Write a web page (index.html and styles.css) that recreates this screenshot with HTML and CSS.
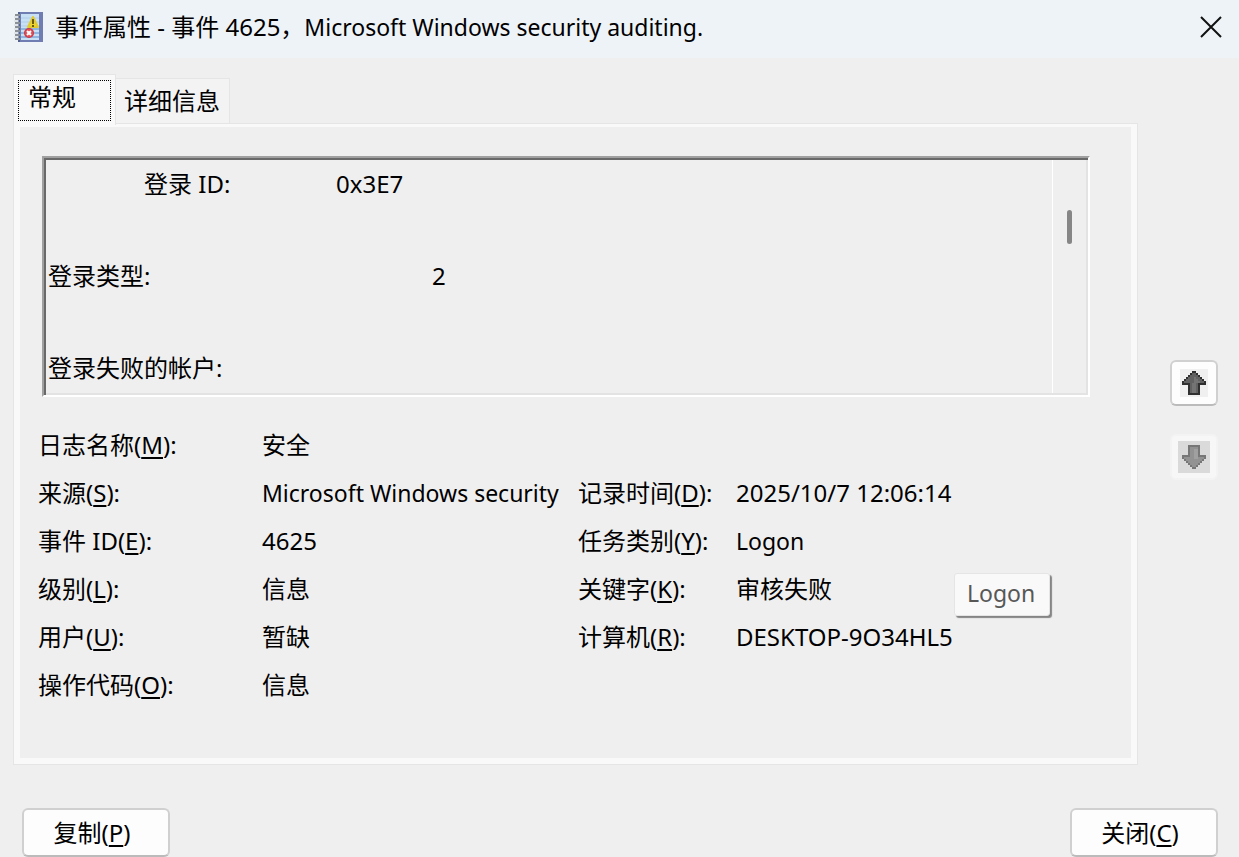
FILE: index.html
```html
<!DOCTYPE html>
<html lang="zh-CN">
<head>
<meta charset="utf-8">
<title>事件属性</title>
<link rel="stylesheet" href="styles.css">
</head>
<body>
<div class="window">
  <header class="titlebar">
    <svg class="app-icon" viewBox="0 0 30 32" aria-hidden="true">
      <rect x="5" y="1" width="24" height="30" fill="#6f7db3"/>
      <rect x="7" y="3" width="18" height="26" fill="#c8e0f4"/>
      <path d="M7 18h18M7 22h18M7 26h18" stroke="#8fb6de" stroke-width="2"/>
      <path d="M7 7h18M7 11h18M7 15h18" stroke="#aecce8" stroke-width="1"/>
      <path d="M5 1v30" stroke="#52618f" stroke-width="2"/>
      <path d="M1 4h5M1 8h5M1 12h5M1 16h5M1 20h5M1 24h5M1 28h5" stroke="#8a9098" stroke-width="2"/>
      <path d="M0 6h5M0 10h5M0 14h5M0 18h5M0 22h5M0 26h5" stroke="#d0d5da" stroke-width="1"/>
      <path d="M19 6l5 10H14z" fill="#ecd52f" stroke="#e3c930" stroke-width="2" stroke-linejoin="round"/>
      <path d="M19 8v5M19 14v2" stroke="#6b5c14" stroke-width="2"/>
      <circle cx="15" cy="22" r="5" fill="#cb3442"/>
      <circle cx="15" cy="22" r="4" fill="#dc5058"/>
      <path d="M13 20l4 4M17 20l-4 4" stroke="#fff" stroke-width="2"/>
    </svg>
    <h1 class="title">事件属性 - 事件 4625，<span class="latin">Microsoft Windows security auditing.</span></h1>
    <button class="close" type="button" aria-label="关闭窗口"><svg viewBox="0 0 20 20" aria-hidden="true"><path d="M0 0L20 20M20 0L0 20"/></svg></button>
  </header>

  <main class="content">
    <section class="tabs">
      <div class="tab-list" role="tablist">
        <button class="tab tab-active" type="button" role="tab" aria-selected="true"><span class="focus">常规</span></button>
        <button class="tab" type="button" role="tab" aria-selected="false">详细信息</button>
      </div>
      <div class="panel" role="tabpanel">
        <div class="description">
          <textarea class="message" rows="5" readonly aria-label="事件说明">&#9;登录 ID:&#9;&#9;0x3E7

登录类型:&#9;&#9;&#9;2

登录失败的帐户:</textarea>
          <div class="scrollbar"><div class="thumb"></div></div>
        </div>
        <dl class="details">
          <dt>日志名称(<u>M</u>):</dt><dd class="wide">安全</dd>
          <dt>来源(<u>S</u>):</dt><dd class="latin">Microsoft Windows security</dd>
          <dt>记录时间(<u>D</u>):</dt><dd>2025/10/7 12:06:14</dd>
          <dt>事件 ID(<u>E</u>):</dt><dd>4625</dd>
          <dt>任务类别(<u>Y</u>):</dt><dd class="latin">Logon</dd>
          <dt>级别(<u>L</u>):</dt><dd>信息</dd>
          <dt>关键字(<u>K</u>):</dt><dd class="has-tip">审核失败<span class="tooltip latin" role="tooltip">Logon</span></dd>
          <dt>用户(<u>U</u>):</dt><dd>暂缺</dd>
          <dt>计算机(<u>R</u>):</dt><dd>DESKTOP-9O34HL5</dd>
          <dt>操作代码(<u>O</u>):</dt><dd class="wide">信息</dd>
        </dl>
      </div>
    </section>

    <nav class="pager" aria-label="事件导航">
      <button class="step" type="button" aria-label="上一个事件">
        <svg viewBox="0 0 28 28" shape-rendering="crispEdges" aria-hidden="true">
          <path d="M0 0h28v28H0z" fill="#f0f0f0"/>
          <path d="M12 2h4v2h2v2h2v2h2v2h2v2h2v4h-6v10H8V16H2V12h2V10h2V8h2V6h2V4h2z" fill="#303030"/>
          <path d="M12 4h4v2h2v2h2v2h2v2h2v2h-6v10h-8V14H4V12h2V10h2V8h2V6h2z" fill="#626262"/>
          <path d="M14 8h2v2h2v2h2v2h-4v10h-4V14h2z" fill="#747474"/>
        </svg>
      </button>
      <button class="step" type="button" aria-label="下一个事件" disabled>
        <svg class="wide-icon" viewBox="0 0 32 32" shape-rendering="crispEdges" aria-hidden="true">
          <path d="M0 0h32v32H0z" fill="#dadada"/>
          <path d="M10 4h12v10h6v4h-2v2h-2v2h-2v2h-2v2h-2v2h-4v-2h-2v-2h-2v-2H8v-2H6v-2H4v-4h6z" fill="#777"/>
          <path d="M12 6h8v10h6v2h-2v2h-2v2h-2v2h-2v2h-4v-2h-2v-2h-2v-2H8v-2H6v-2h6z" fill="#929292"/>
          <path d="M16 8h4v10h-4z" fill="#a0a0a0"/>
        </svg>
      </button>
    </nav>
  </main>

  <footer class="actions">
    <button class="action" type="button">复制(<u>P</u>)</button>
    <button class="action" type="button">关闭(<u>C</u>)</button>
  </footer>
</div>
</body>
</html>
```
FILE: styles.css
```css
* {
  box-sizing: border-box;
}

body {
  margin: 0;
  background: #efefef;
  color: #000;
  font: 24px/32px "Noto Sans", "Noto Sans CJK SC", sans-serif;
}

button,
textarea {
  font: inherit;
  color: inherit;
}

.latin {
  font-size: 23px;
}

.window {
  display: flex;
  flex-direction: column;
  min-height: 100vh;
}

.titlebar {
  display: flex;
  align-items: center;
  height: 58px;
  padding: 0 18px 4px 14px;
  background: #eef3f8;
}

.app-icon {
  width: 30px;
  height: 32px;
  margin-right: 11px;
}

.title {
  flex: 1;
  margin: 0;
  font-size: 24px;
  font-weight: 400;
}

.close {
  display: flex;
  padding: 0;
  border: 0;
  background: none;
}

.close svg {
  width: 20px;
  height: 20px;
  overflow: visible;
  fill: none;
  stroke: #111;
  stroke-width: 2;
}

.content {
  display: flex;
  gap: 32px;
  flex: 1;
  padding: 16px 21px 0 13px;
}

.tabs {
  display: flex;
  flex-direction: column;
  flex: 1;
}

.tab-list {
  display: flex;
  align-items: flex-end;
}

.tab {
  height: 45px;
  padding: 0 9px 0 8px;
  border: 1px solid #e5e5e5;
  border-bottom: 0;
  border-left: 0;
  background: #f3f3f3;
}

.tab-active {
  position: relative;
  width: 103px;
  height: 51px;
  margin-bottom: -2px;
  padding: 4px;
  border-left: 1px solid #e5e5e5;
  background: #f9f9f9;
}

.focus {
  display: block;
  height: 41px;
  padding: 0 9px;
  border: 1px dotted #000;
  text-align: left;
}

.panel {
  flex: 1;
  padding: 27px 47px 48px 16px;
  border: 1px solid #e5e5e5;
  background: #efefef;
  box-shadow: inset 6px 3px #f9f9f9, inset -6px -6px #f9f9f9;
}

.description {
  display: flex;
  margin: 5px 0 24px 12px;
  border: 2px solid;
  border-color: #a0a0a0 #fff #fff #a0a0a0;
  box-shadow: inset 2px 2px #696969, inset -2px -2px #e3e3e3;
}

.message {
  flex: 1;
  height: 237px;
  padding: 3px 4px;
  border: 0;
  outline: 0;
  background: none;
  line-height: 46px;
  tab-size: 96px;
  resize: none;
  overflow: hidden;
}

.scrollbar {
  width: 36px;
  margin: 2px 0;
  padding: 50px 14px 0;
  border-left: 1px solid #fff;
}

.thumb {
  width: 5px;
  height: 34px;
  border-radius: 3px;
  background: #868686;
}

.details {
  display: grid;
  grid-template-columns: 224px 316px 158px 1fr;
  grid-auto-rows: 48px;
  align-items: center;
  margin: 0 0 0 8px;
  white-space: nowrap;
}

.details dd {
  margin: 0;
}

.details .wide {
  grid-column: 2 / -1;
}

.has-tip {
  position: relative;
}

.tooltip {
  position: absolute;
  top: 0;
  left: 218px;
  padding: 3px 14px 6px 12px;
  border: 1px solid #e5e5e5;
  border-radius: 3px;
  background: #f9f9f9;
  box-shadow: 2px 2px 1px #858585;
  color: #575757;
}

.pager {
  display: flex;
  flex-direction: column;
  justify-content: center;
  gap: 28px;
}

.step {
  display: flex;
  align-items: center;
  justify-content: center;
  width: 48px;
  height: 46px;
  padding: 0;
  border: 2px solid #d0d0d0;
  border-bottom-color: #bbb;
  border-radius: 6px;
  background: #fdfdfd;
}

.step:disabled {
  border-color: #f3f3f3;
  background: #f7f7f7;
}

.step svg {
  width: 28px;
  height: 28px;
}

.step .wide-icon {
  width: 32px;
  height: 32px;
}

.actions {
  display: flex;
  justify-content: space-between;
  padding: 43px 21px 0 22px;
}

.action {
  width: 148px;
  height: 49px;
  padding: 0 8px 0 0;
  border: 2px solid #d0d0d0;
  border-bottom-color: #bbb;
  border-radius: 6px;
  background: #fdfdfd;
}

u {
  text-decoration-thickness: 2px;
  text-underline-offset: 3px;
}
```
